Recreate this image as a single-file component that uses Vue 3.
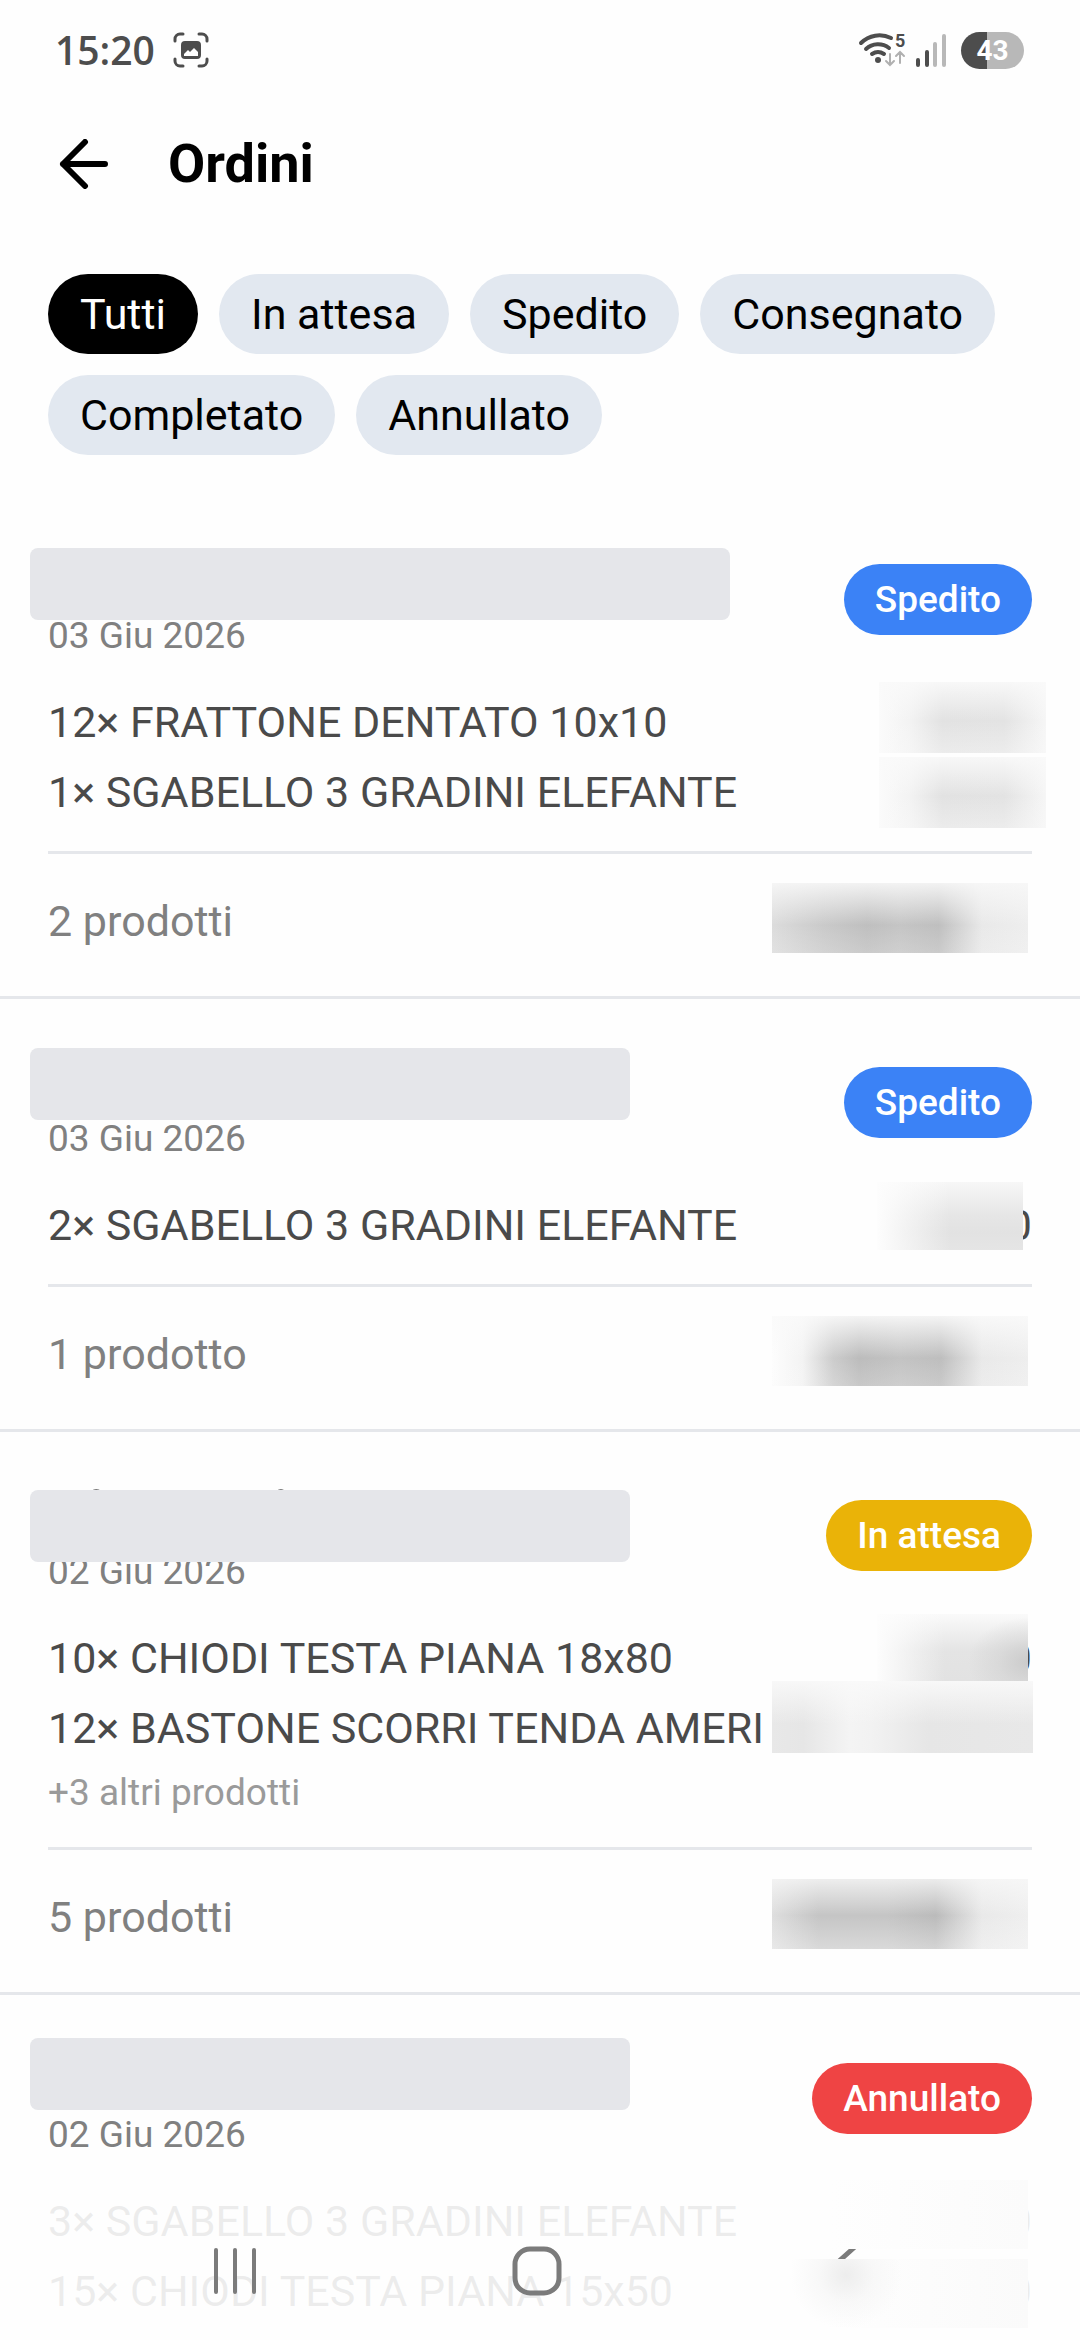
<script setup>
import { ref } from 'vue'

const filters = ['Tutti', 'In attesa', 'Spedito', 'Consegnato', 'Completato', 'Annullato']
const active = ref('Tutti')

const orders = [
  {
    id: 1,
    date: '03 Giu 2026',
    status: 'Spedito',
    tone: 'blue',
    items: [
      { qty: 12, name: 'FRATTONE DENTATO 10x10', price: '', cover: 'cover-a' },
      { qty: 1, name: 'SGABELLO 3 GRADINI ELEFANTE', price: '', cover: 'cover-b' }
    ],
    count: '2 prodotti',
    total: 'total-a'
  },
  {
    id: 2,
    date: '03 Giu 2026',
    status: 'Spedito',
    tone: 'blue',
    items: [{ qty: 2, name: 'SGABELLO 3 GRADINI ELEFANTE', price: '0', cover: 'cover-c' }],
    count: '1 prodotto',
    total: 'total-b'
  },
  {
    id: 3,
    date: '02 Giu 2026',
    status: 'In attesa',
    tone: 'yellow',
    items: [
      { qty: 10, name: 'CHIODI TESTA PIANA 18x80', price: '0', cover: 'cover-d' },
      { qty: 12, name: 'BASTONE SCORRI TENDA AMERI', price: '', cover: 'cover-e' }
    ],
    more: '+3 altri prodotti',
    count: '5 prodotti',
    total: 'total-c'
  },
  {
    id: 4,
    date: '02 Giu 2026',
    status: 'Annullato',
    tone: 'red',
    items: [
      { qty: 3, name: 'SGABELLO 3 GRADINI ELEFANTE', price: '0', cover: 'cover-f' },
      { qty: 15, name: 'CHIODI TESTA PIANA 15x50', price: '0', cover: 'cover-g' }
    ]
  }
]
</script>

<template>
  <div class="page">
    <div class="status-bar">
      <div class="status-left">
        <span class="clock">15:20</span>
        <svg width="36" height="36" viewBox="0 0 36 36" fill="none" stroke="#4d4d4d" stroke-width="3" stroke-linecap="round">
          <path d="M2 9V7a5 5 0 0 1 5-5h3M26 2h3a5 5 0 0 1 5 5v2M34 27v2a5 5 0 0 1-5 5h-3M10 34H7a5 5 0 0 1-5-5v-2" />
          <path fill="#4d4d4d" stroke="none" fill-rule="evenodd" d="M12 9h12a4 4 0 0 1 4 4v10a4 4 0 0 1-4 4H12a4 4 0 0 1-4-4V13a4 4 0 0 1 4-4zM11 24h14v-4l-4-4-4 4-2-2-4 4z" />
        </svg>
      </div>
      <div class="status-right">
        <svg width="48" height="44" viewBox="0 -4 48 44" fill="none" stroke="#4d4d4d" stroke-width="4" stroke-linecap="round">
          <path d="M3 11a26 26 0 0 1 30-5M8 17a18 18 0 0 1 23-1M14 22a11 11 0 0 1 12 0" />
          <circle cx="20" cy="28" r="3" fill="#4d4d4d" stroke="none" />
          <path stroke="#b0b0b0" stroke-width="2" d="M32 22v11M28 29l4 4 4-4M42 31V20M38 24l4-4 4 4" />
          <text x="37" y="15" class="wifi-gen">5</text>
        </svg>
        <svg width="30" height="36" viewBox="0 0 30 36" stroke-width="4" stroke-linecap="round">
          <path stroke="#4d4d4d" d="M2 28v5M11 20v13" />
          <path stroke="#b8b8b8" d="M19 12v21M28 4v29" />
        </svg>
        <span class="battery">43</span>
      </div>
    </div>

    <header class="app-bar">
      <button class="back" type="button" aria-label="Indietro">
        <svg width="50" height="50" viewBox="0 0 50 50" fill="none" stroke="#000" stroke-width="6" stroke-linecap="round" stroke-linejoin="round">
          <path d="M46 25H4M26 3 4 25l22 22" />
        </svg>
      </button>
      <h1>Ordini</h1>
    </header>

    <div class="filters">
      <button
        v-for="f in filters"
        :key="f"
        type="button"
        class="chip"
        :class="{ active: f === active }"
        @click="active = f"
      >{{ f }}</button>
    </div>

    <main>
      <article v-for="o in orders" :key="o.id" class="order" :class="'order-' + o.id">
        <span class="number-cover"></span>
        <svg v-if="o.id === 3" class="number-peek" width="194" height="4" viewBox="0 0 194 4">
          <path fill="none" stroke="#777" stroke-width="2" d="M1 4q4-4 9 0M186 4q4-4 8 0" />
        </svg>
        <div class="order-head">
          <time>{{ o.date }}</time>
          <span class="badge" :class="o.tone">{{ o.status }}</span>
        </div>
        <ul>
          <li v-for="item in o.items" :key="item.name">
            <span>{{ item.qty }}× {{ item.name }}</span>
            <span>{{ item.price }}</span>
            <span class="cover" :class="item.cover"></span>
          </li>
        </ul>
        <p v-if="o.more" class="more">{{ o.more }}</p>
        <footer v-if="o.count">
          <span>{{ o.count }}</span>
          <span class="cover total" :class="o.total"></span>
        </footer>
      </article>
    </main>

    <nav class="system-nav">
      <button type="button" aria-label="Recenti">
        <svg width="60" height="60" viewBox="0 0 60 60" stroke="#7b7b7b" stroke-width="4" stroke-linecap="round">
          <path d="M11 9v42M30 9v42M49 9v42" />
        </svg>
      </button>
      <button type="button" aria-label="Home">
        <svg width="60" height="60" viewBox="0 0 60 60" fill="none" stroke="#7b7b7b" stroke-width="5">
          <rect x="8" y="8" width="44" height="44" rx="15" />
        </svg>
      </button>
      <button type="button" aria-label="Indietro">
        <svg width="60" height="60" viewBox="0 0 60 60" fill="none" stroke="#7b7b7b" stroke-width="5" stroke-linecap="round">
          <path d="M48 4 19 30l29 26" />
        </svg>
      </button>
    </nav>
  </div>
</template>

<style>
body {
  background: #fefefe;
}
</style>

<style scoped>
.page {
  min-height: 100vh;
  font-family: Roboto, "Liberation Sans", sans-serif;
  font-size: 43px;
  color: #000;
}

button {
  border: 0;
  padding: 0;
  background: none;
  font: inherit;
  color: inherit;
}

svg {
  display: block;
}

.status-bar {
  display: flex;
  justify-content: space-between;
  align-items: center;
  height: 100px;
  padding: 0 56px 0 55px;
}

.status-left {
  display: flex;
  align-items: center;
  gap: 18px;
}

.clock {
  font-family: "Open Sans", sans-serif;
  font-size: 39px;
  line-height: 40px;
  font-weight: 600;
  color: #4d4d4d;
}

.status-right {
  display: flex;
  align-items: center;
  gap: 10px;
}

.wifi-gen {
  font-family: Roboto, sans-serif;
  font-size: 18px;
  font-weight: 700;
  fill: #4d4d4d;
  stroke: none;
}

.battery {
  width: 63px;
  margin-left: 5px;
  border-radius: 19px;
  background: linear-gradient(to right, #4d4d4d 26px, #b8b8b8 26px);
  color: #fff;
  font-size: 28px;
  line-height: 37px;
  font-weight: 700;
  text-align: center;
}

.app-bar {
  display: flex;
  align-items: center;
  gap: 59px;
  height: 128px;
  padding: 0 59px;
}

h1 {
  margin: 0;
  font-size: 54px;
  line-height: 64px;
  font-weight: 700;
}

.filters {
  display: flex;
  flex-wrap: wrap;
  gap: 21px;
  padding: 46px 48px 41px;
}

.chip {
  padding: 0 32px;
  border-radius: 40px;
  background: #e2e8f0;
  line-height: 80px;
}

.chip.active {
  background: #000;
  color: #fff;
}

.order {
  position: relative;
  padding: 44px 48px 40px;
  border-bottom: 3px solid #e5e7eb;
}

.order:last-child {
  padding-bottom: 0;
  border-bottom: 0;
}

.order-head {
  display: flex;
  justify-content: space-between;
  align-items: center;
  height: 118px;
}

time {
  align-self: flex-end;
  font-size: 37px;
  line-height: 44px;
  color: #808080;
}

.badge {
  padding: 0 31px;
  border-radius: 36px;
  font-size: 37px;
  line-height: 71px;
  font-weight: 500;
  color: #fff;
}

.blue {
  background: #3b82f6;
}

.yellow {
  background: #eab308;
}

.red {
  background: #ef4444;
}

ul {
  margin: 29px 0 0;
  padding: 0;
  list-style: none;
}

li {
  position: relative;
  display: flex;
  justify-content: space-between;
  line-height: 70px;
  color: #4a4a4a;
  white-space: nowrap;
}

.more {
  margin: 0;
  font-size: 37px;
  line-height: 60px;
  color: #9a9a9a;
}

footer {
  position: relative;
  margin-top: 24px;
  padding-top: 32px;
  border-top: 3px solid #e5e7eb;
  line-height: 70px;
  color: #808080;
}

/* Hidden order numbers and prices */
.number-cover {
  position: absolute;
  top: 49px;
  left: 30px;
  width: 600px;
  height: 72px;
  border-radius: 8px;
  background: #e5e6ea;
}

.order-1 .number-cover {
  top: 52px;
  width: 700px;
}

.order-3 .number-cover {
  top: 58px;
}

.order-4 .number-cover {
  top: 43px;
}

.order-head time {
  position: relative;
  z-index: -1;
}

.number-peek {
  position: absolute;
  top: 56px;
  left: 91px;
  z-index: -1;
}

.cover {
  position: absolute;
  z-index: 3;
}

.cover-a,
.cover-b {
  right: -14px;
  top: -5px;
  width: 167px;
  height: 71px;
  background:
    linear-gradient(rgba(250, 250, 250, 0.9), rgba(250, 250, 250, 0) 55%, rgba(250, 250, 250, 0.4)),
    linear-gradient(to right, #fbfbfb, #f3f3f3 18%, #e2e2e2 38%, #e3e3e3 75%, #f6f6f6);
}

.cover-b {
  top: 0;
}

.cover-c {
  right: 9px;
  top: -8px;
  width: 146px;
  height: 68px;
  background:
    linear-gradient(to right, #fdfdfd, rgba(253, 253, 253, 0) 50%),
    linear-gradient(#f7f7f7, #e6e6e6 50%, #e2e2e2 75%, #e5e5e5);
}

.cover-d {
  right: 4px;
  top: -9px;
  width: 151px;
  height: 67px;
  background:
    radial-gradient(ellipse 60px 45px at 100% 72%, #cbcbcb, rgba(203, 203, 203, 0.4) 50%, transparent),
    linear-gradient(to right, #fdfdfd, rgba(253, 253, 253, 0) 45%),
    linear-gradient(#fafafa, #e4e4e4 55%, #e2e2e2);
}

.cover-e {
  right: -1px;
  top: -12px;
  width: 261px;
  height: 72px;
  background:
    linear-gradient(rgba(250, 250, 250, 0.9), rgba(250, 250, 250, 0) 60%),
    linear-gradient(to right, #e8e8e8 0, #e6e6e6 12%, #f4f4f4 30%, #f2f2f2 38%, #e6e6e6 60%, #e8e8e8);
}

.cover-f,
.cover-g {
  right: 4px;
  top: -6px;
  width: 248px;
  height: 69px;
  background: linear-gradient(to right, #fefefe 20%, #fbfbfb);
}

.cover-g {
  top: 3px;
  background:
    radial-gradient(ellipse 56px 54px at 66px 16px, #ededed, rgba(240, 240, 240, 0.4) 50%, transparent),
    linear-gradient(to right, #fefefe 20%, #fafafa);
}

.total {
  right: 4px;
  top: 29px;
  width: 256px;
  height: 70px;
}

.total-a {
  background:
    linear-gradient(rgba(248, 248, 248, 0.9), rgba(248, 248, 248, 0) 60%, rgba(248, 248, 248, 0.2)),
    linear-gradient(to right, #dcdcdc, #cacaca 20%, #bfbfbf 37%, #c5c5c5 50%, #bfbfbf 65%, #e9e9e9 82%, #eeeeee);
}

.total-b {
  background:
    linear-gradient(rgba(250, 250, 250, 0.9), rgba(250, 250, 250, 0) 60%, rgba(250, 250, 250, 0.2)),
    linear-gradient(to right, #fdfdfd, #f3f3f3 12%, #cccccc 24%, #bcbcbc 34%, #c3c3c3 50%, #bebebe 66%, #e9e9e9 82%, #eeeeee);
}

.total-c {
  background:
    linear-gradient(rgba(248, 248, 248, 0.8), rgba(248, 248, 248, 0) 52%, rgba(248, 248, 248, 0.4)),
    linear-gradient(to right, #dedede, #c5c5c5 18%, #c5c5c5 45%, #bbbbbb 64%, #e9e9e9 82%, #efefef);
}

.system-nav {
  position: fixed;
  left: 0;
  right: 0;
  bottom: 0;
  z-index: 2;
  display: grid;
  grid-template-columns: repeat(3, 1fr);
  align-items: center;
  height: 144px;
  padding: 5px 90px 0 84px;
  box-sizing: border-box;
  background: rgba(254, 254, 254, 0.9);
}

.system-nav button {
  display: flex;
  justify-content: center;
}
</style>
